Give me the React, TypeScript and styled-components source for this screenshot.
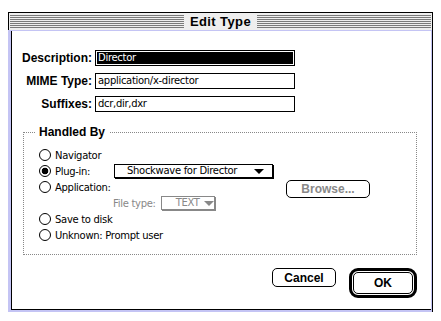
import { createGlobalStyle } from "styled-components"
import styled from "styled-components"

const Global = createGlobalStyle`
  html, body { margin: 0; padding: 0; background: #fff; }
  body { font-family: "DejaVu Sans", sans-serif; }
`

const chicago = `font-family: "Liberation Sans", Arial, sans-serif; font-weight: 700; font-size: 12px;`
const geneva = `font-family: "DejaVu Sans", sans-serif; font-size: 10px; letter-spacing: -0.3px;`

export default function App() {
  return (
    <Page>
      <Global />
      <Window>
        <TitleBar>
          <Stripes />
          <Title>Edit Type</Title>
          <Stripes />
        </TitleBar>
        <Frame>
          <Content>
            <Fields>
              <Label>Description:</Label>
              <TextField $selected>Director</TextField>
              <Label>MIME Type:</Label>
              <TextField>application/x-director</TextField>
              <Label>Suffixes:</Label>
              <TextField>dcr,dir,dxr</TextField>
            </Fields>

            <Group>
              <Legend>Handled By</Legend>
              <Rows>
                <Radio><Dot /> Navigator</Radio>
                <span />
                <Radio><Dot $on /> Plug-in:</Radio>
                <Popup $w={159}>
                  <PopupText>Shockwave for Director</PopupText>
                  <Arrow />
                </Popup>
                <Radio><Dot /> Application:</Radio>
                <Button $disabled>Browse...</Button>
                <span />
                <FileType>
                  <DimLabel>File type:</DimLabel>
                  <Popup $w={54} $disabled>
                    <PopupText>TEXT</PopupText>
                    <Arrow $disabled />
                  </Popup>
                </FileType>
                <Radio><Dot /> Save to disk</Radio>
                <span />
                <Radio><Dot /> Unknown: Prompt user</Radio>
                <span />
              </Rows>
            </Group>

            <Footer>
              <Button $w={64} $h={19}>Cancel</Button>
              <DefaultRing>
                <Button $w={60} $h={22}>OK</Button>
              </DefaultRing>
            </Footer>
          </Content>
        </Frame>
      </Window>
    </Page>
  )
}

const Page = styled.div`
  padding: 12px 0 0 8px;
`

const Window = styled.div`
  width: 425px;
`

const TitleBar = styled.div`
  height: 17px;
  border: 1px solid #000;
  border-bottom: none;
  background: #eeeeee;
  display: flex;
  align-items: center;
  gap: 6px;
  padding: 0 1px;
`

const Stripes = styled.div`
  flex: 1;
  height: 13px;
  background: repeating-linear-gradient(to bottom, #7a7a7a 0 1px, #eeeeee 1px 2px);
`

const Title = styled.div`
  ${chicago};
  font-size: 13px;
  letter-spacing: 0.4px;
  color: #000;
  line-height: 17px;
`

const Frame = styled.div`
  background: #c4c4f4;
  border-right: 1px solid #000;
  padding: 1px 1px 2px 3px;
`

const Content = styled.div`
  background: #fff;
  border-left: 1px solid #000;
  border-bottom: 1px solid #000;
  height: 279px;
  box-sizing: border-box;
  padding-top: 19px;
`

const Fields = styled.div`
  display: grid;
  grid-template-columns: 80px 200px;
  column-gap: 3px;
  row-gap: 7px;
`

const Label = styled.div`
  ${chicago};
  text-align: right;
  line-height: 16px;
`

const TextField = styled.div<{ $selected?: boolean }>`
  ${geneva};
  height: 16px;
  box-sizing: border-box;
  border: 1px solid #000;
  padding: 1px;
  line-height: 12px;
  text-indent: 1px;
  color: ${(p) => (p.$selected ? "#fff" : "#000")};
  background: ${(p) => (p.$selected ? "linear-gradient(#000, #000) content-box, #fff" : "#fff")};
`

const Group = styled.div`
  position: relative;
  margin: 20px 0 0 11px;
  width: 394px;
  height: 123px;
  box-sizing: border-box;
  border: 1px dotted #888;
  padding: 14px 0 0 15px;
`

const Legend = styled.div`
  ${chicago};
  position: absolute;
  top: -8px;
  left: 11px;
  padding: 0 4px;
  background: #fff;
  line-height: 14px;
`

const Rows = styled.div`
  display: grid;
  grid-template-columns: 75px 1fr;
  grid-auto-rows: 16px;
  align-items: center;
`

const Radio = styled.div`
  ${geneva};
  display: flex;
  align-items: center;
  gap: 4px;
  white-space: nowrap;
`

const Dot = styled.span<{ $on?: boolean }>`
  width: 12px;
  height: 12px;
  box-sizing: border-box;
  border: 1px solid #000;
  border-radius: 50%;
  flex: none;
  background: ${(p) =>
    p.$on ? "radial-gradient(circle, #000 0 3.2px, #fff 3.6px)" : "#fff"};
`

const Popup = styled.div<{ $w: number; $disabled?: boolean }>`
  ${geneva};
  width: ${(p) => p.$w}px;
  height: 14px;
  box-sizing: border-box;
  border: 1px solid ${(p) => (p.$disabled ? "#888" : "#000")};
  box-shadow: 1px 1px 0 ${(p) => (p.$disabled ? "#888" : "#000")};
  color: ${(p) => (p.$disabled ? "#888" : "#000")};
  display: flex;
  align-items: center;
  gap: 4px;
  padding: 0 ${(p) => (p.$disabled ? 2 : 8)}px 0 ${(p) => (p.$disabled ? 14 : 12)}px;
  line-height: 12px;
`

const PopupText = styled.span`
  flex: 1;
  white-space: nowrap;
`

const Arrow = styled.span<{ $disabled?: boolean }>`
  width: 0;
  height: 0;
  flex: none;
  border-left: 5px solid transparent;
  border-right: 5px solid transparent;
  border-top: 5px solid ${(p) => (p.$disabled ? "#888" : "#000")};
`

const FileType = styled.div`
  display: flex;
  align-items: center;
  gap: 5px;
  margin-left: -1px;
`

const DimLabel = styled.span`
  ${geneva};
  color: #888;
`

const Button = styled.div<{ $w?: number; $h?: number; $disabled?: boolean }>`
  ${chicago};
  width: ${(p) => p.$w ?? 84}px;
  height: ${(p) => p.$h ?? 18}px;
  box-sizing: border-box;
  border: 1px solid #000;
  border-radius: 5px;
  display: flex;
  align-items: center;
  justify-content: center;
  color: ${(p) => (p.$disabled ? "#888" : "#000")};
  margin-left: ${(p) => (p.$disabled ? "172px" : "0")};
  align-self: start;
  margin-top: ${(p) => (p.$disabled ? "1px" : "0")};
`

const DefaultRing = styled.div`
  border: 3px solid #000;
  border-radius: 9px;
  padding: 1px;
  box-sizing: border-box;
  width: 68px;
  height: 30px;
  display: flex;
  align-items: center;
  justify-content: center;
`

const Footer = styled.div`
  display: flex;
  justify-content: flex-end;
  align-items: center;
  gap: 13px;
  margin-top: 13px;
  padding-right: 14px;
`
